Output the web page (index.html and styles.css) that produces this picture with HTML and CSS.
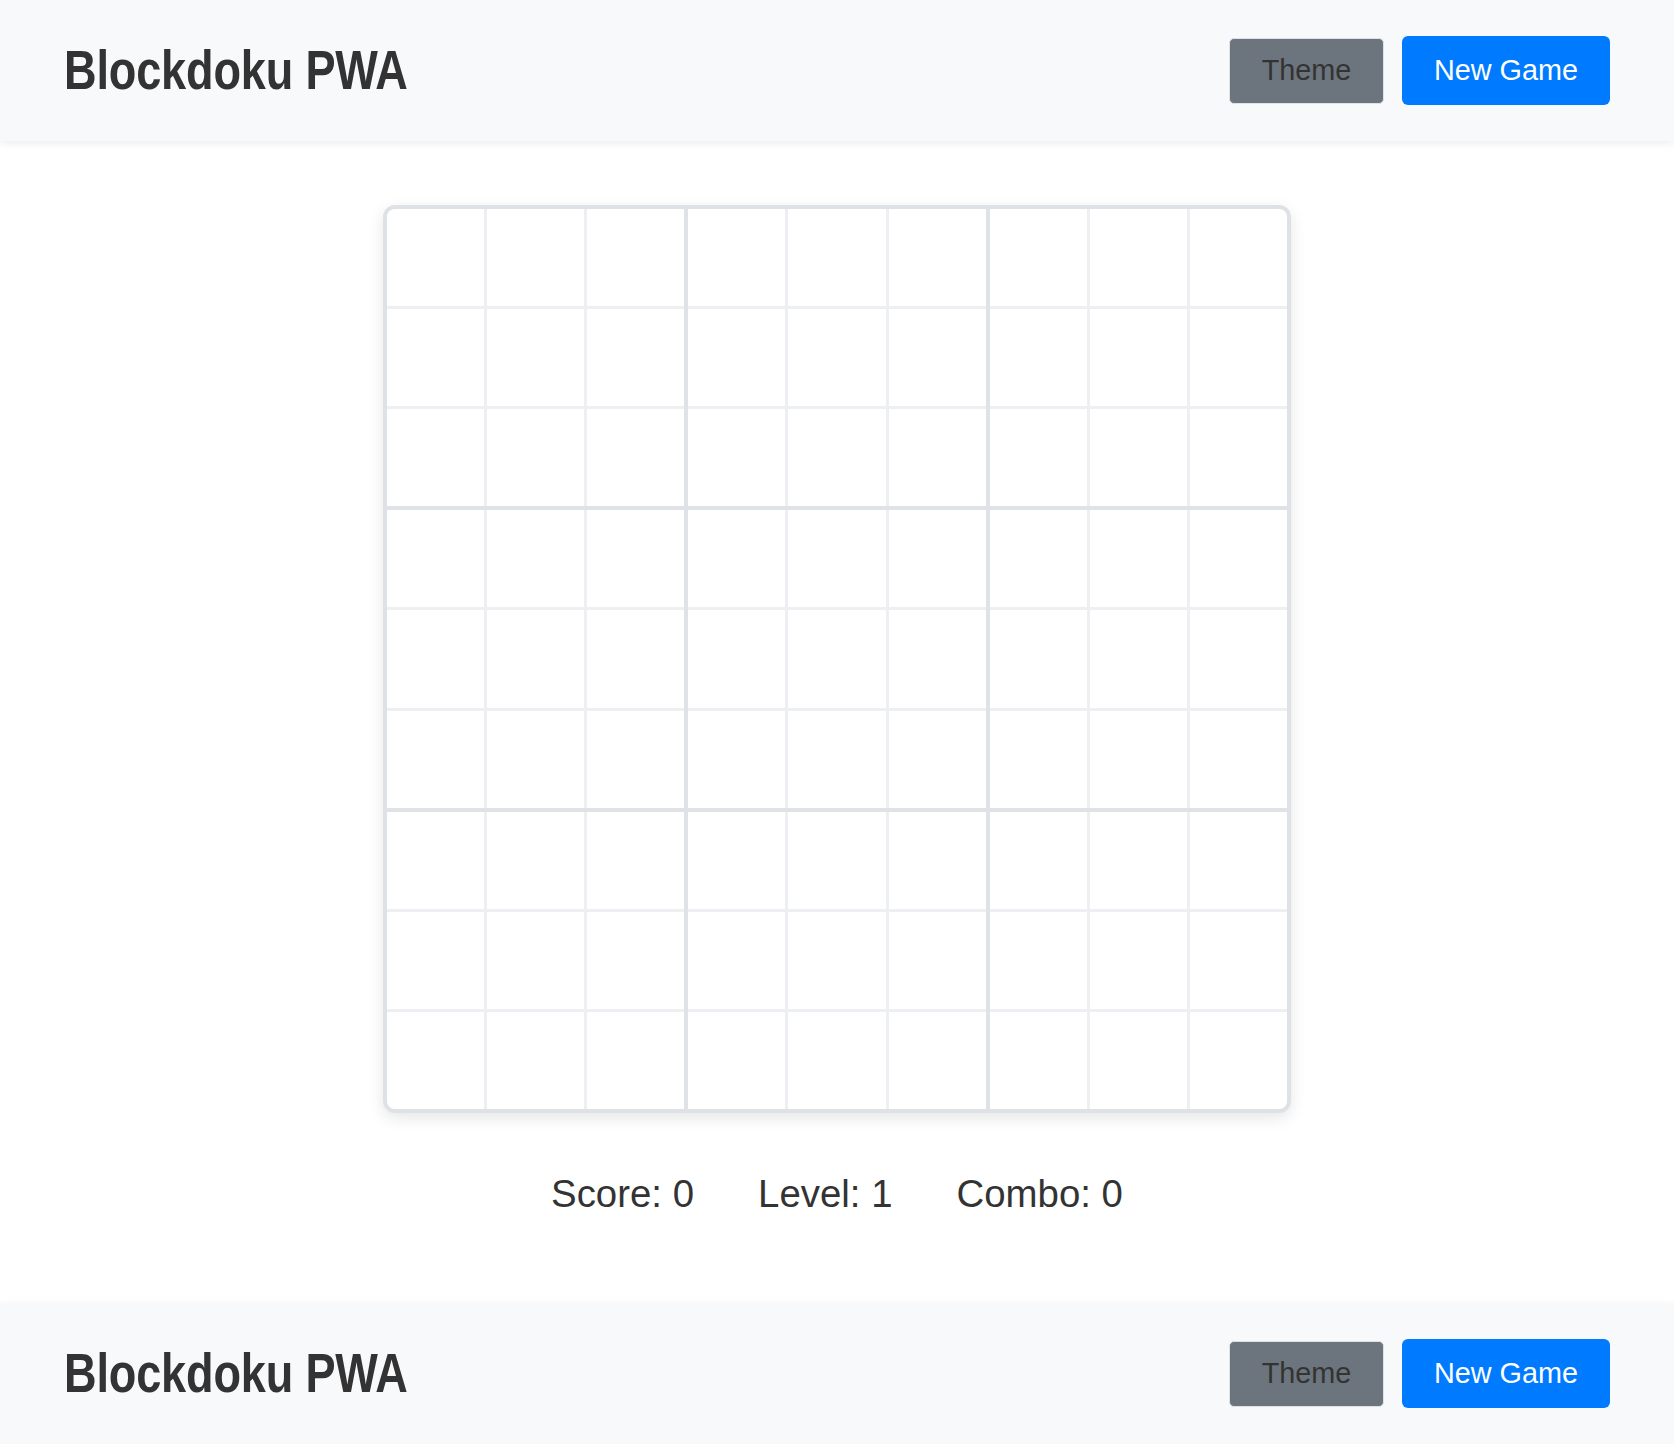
FILE: index.html
```html
<!DOCTYPE html>
<html lang="en">
<head>
<meta charset="utf-8">
<title>Blockdoku PWA</title>
<link rel="stylesheet" href="styles.css">
</head>
<body>
<header class="app-header">
  <h1 class="app-title">Blockdoku PWA</h1>
  <div class="actions">
    <button class="btn btn-theme">Theme</button>
    <button class="btn btn-new">New Game</button>
  </div>
</header>
<main class="game">
  <div class="board">
    <div class="box"><div class="cell"></div><div class="cell"></div><div class="cell"></div><div class="cell"></div><div class="cell"></div><div class="cell"></div><div class="cell"></div><div class="cell"></div><div class="cell"></div></div>
    <div class="box"><div class="cell"></div><div class="cell"></div><div class="cell"></div><div class="cell"></div><div class="cell"></div><div class="cell"></div><div class="cell"></div><div class="cell"></div><div class="cell"></div></div>
    <div class="box"><div class="cell"></div><div class="cell"></div><div class="cell"></div><div class="cell"></div><div class="cell"></div><div class="cell"></div><div class="cell"></div><div class="cell"></div><div class="cell"></div></div>
    <div class="box"><div class="cell"></div><div class="cell"></div><div class="cell"></div><div class="cell"></div><div class="cell"></div><div class="cell"></div><div class="cell"></div><div class="cell"></div><div class="cell"></div></div>
    <div class="box"><div class="cell"></div><div class="cell"></div><div class="cell"></div><div class="cell"></div><div class="cell"></div><div class="cell"></div><div class="cell"></div><div class="cell"></div><div class="cell"></div></div>
    <div class="box"><div class="cell"></div><div class="cell"></div><div class="cell"></div><div class="cell"></div><div class="cell"></div><div class="cell"></div><div class="cell"></div><div class="cell"></div><div class="cell"></div></div>
    <div class="box"><div class="cell"></div><div class="cell"></div><div class="cell"></div><div class="cell"></div><div class="cell"></div><div class="cell"></div><div class="cell"></div><div class="cell"></div><div class="cell"></div></div>
    <div class="box"><div class="cell"></div><div class="cell"></div><div class="cell"></div><div class="cell"></div><div class="cell"></div><div class="cell"></div><div class="cell"></div><div class="cell"></div><div class="cell"></div></div>
    <div class="box"><div class="cell"></div><div class="cell"></div><div class="cell"></div><div class="cell"></div><div class="cell"></div><div class="cell"></div><div class="cell"></div><div class="cell"></div><div class="cell"></div></div>
  </div>
  <div class="stats">
    <span class="stat">Score: 0</span>
    <span class="stat">Level: 1</span>
    <span class="stat">Combo: 0</span>
  </div>
</main>
<header class="app-header app-header-bottom">
  <h1 class="app-title">Blockdoku PWA</h1>
  <div class="actions">
    <button class="btn btn-theme">Theme</button>
    <button class="btn btn-new">New Game</button>
  </div>
</header>
</body>
</html>
```
FILE: styles.css
```css
* { box-sizing: border-box; }
html, body {
  margin: 0;
  padding: 0;
  background: #ffffff;
  font-family: "Liberation Sans", Arial, sans-serif;
  color: #333333;
}
.app-header {
  height: 141px;
  background: #f8f9fa;
  display: flex;
  align-items: center;
  justify-content: space-between;
  padding: 0 64px 0 64px;
  box-shadow: 0 2px 8px rgba(0, 0, 0, 0.08);
  position: relative;
  z-index: 1;
}
.app-title {
  margin: 0;
  font-family: "Liberation Sans", Arial, sans-serif;
  font-weight: 700;
  font-size: 55px;
  line-height: 1;
  color: #333333;
  transform: scaleX(0.82);
  transform-origin: left center;
  letter-spacing: -0.2px;
}
.actions {
  display: flex;
  align-items: center;
  gap: 18px;
}
.btn {
  font-family: "Liberation Sans", Arial, sans-serif;
  font-size: 28.8px;
  line-height: 1;
  cursor: pointer;
  display: flex;
  align-items: center;
  justify-content: center;
  padding: 0;
}
.btn-theme {
  width: 155px;
  height: 66px;
  background: #6c757d;
  color: #333333;
  border: 1px solid #dee2e6;
  border-radius: 5px;
}
.btn-new {
  width: 208px;
  height: 69px;
  background: #007bff;
  color: #ffffff;
  border: none;
  border-radius: 6px;
}
.game {
  display: flex;
  flex-direction: column;
  align-items: center;
  padding: 64px 0 87px;
}
.board {
  width: 908px;
  height: 908px;
  border: 4px solid #dee2e6;
  border-radius: 12px;
  background: #dfe3e7;
  display: grid;
  grid-template-columns: repeat(3, 1fr);
  grid-template-rows: repeat(3, 1fr);
  gap: 4px;
  overflow: hidden;
  box-shadow: 0 5px 16px rgba(0, 0, 0, 0.1);
}
.box {
  background: #edeff2;
  display: grid;
  grid-template-columns: repeat(3, 1fr);
  grid-template-rows: repeat(3, 1fr);
  gap: 3px;
}
.cell {
  background: #ffffff;
}
.stats {
  margin-top: 59px;
  display: flex;
  gap: 64px;
  font-size: 38.4px;
  line-height: 1.15;
  color: #333333;
}
```
